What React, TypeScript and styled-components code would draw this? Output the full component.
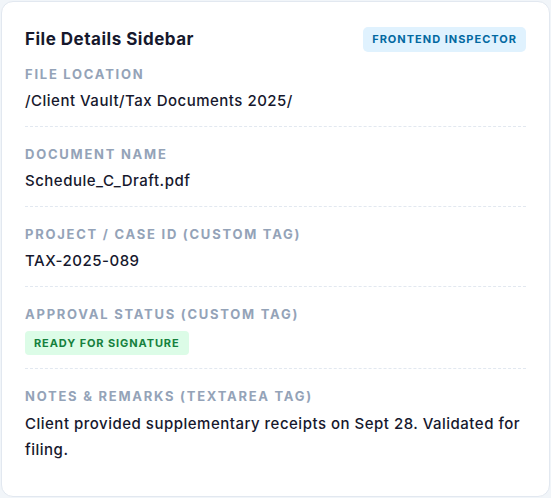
import styled, { createGlobalStyle } from "styled-components";

const GlobalStyle = createGlobalStyle`
  html, body {
    margin: 0;
    padding: 0;
    background: #f1f5f9;
  }
  body {
    font-family: Inter, "Noto Sans", sans-serif;
    -webkit-font-smoothing: antialiased;
  }
`;

type Field = {
  label: string;
  value: string;
  kind?: "text" | "status" | "notes";
};

const FIELDS: Field[] = [
  { label: "File Location", value: "/Client Vault/Tax Documents 2025/" },
  { label: "Document Name", value: "Schedule_C_Draft.pdf" },
  { label: "Project / Case ID (Custom Tag)", value: "TAX-2025-089" },
  { label: "Approval Status (Custom Tag)", value: "Ready for Signature", kind: "status" },
  {
    label: "Notes & Remarks (Textarea Tag)",
    value: "Client provided supplementary receipts on Sept 28. Validated for filing.",
    kind: "notes",
  },
];

export default function App() {
  return (
    <>
      <GlobalStyle />
      <Page>
        <Card>
          <Header>
            <Title>File Details Sidebar</Title>
            <Badge>Frontend Inspector</Badge>
          </Header>
          <FieldList>
            {FIELDS.map((f, i) => (
              <FieldRow key={f.label} $last={i === FIELDS.length - 1} $status={f.kind === "status"}>
                <Label>{f.label}</Label>
                {f.kind === "status" ? (
                  <StatusPill>{f.value}</StatusPill>
                ) : (
                  <Value $notes={f.kind === "notes"}>{f.value}</Value>
                )}
              </FieldRow>
            ))}
          </FieldList>
        </Card>
      </Page>
    </>
  );
}

const Page = styled.div`
  width: 551px;
  height: 498px;
  padding: 1px;
  box-sizing: border-box;
`;

const Card = styled.div`
  box-sizing: border-box;
  height: 100%;
  background: #ffffff;
  border: 1px solid #e2e8f0;
  border-radius: 12px;
  padding: 24px 23px 0 23px;
  display: flex;
  flex-direction: column;
`;

const Header = styled.div`
  display: flex;
  align-items: center;
  justify-content: space-between;
  height: 26px;
  margin-bottom: 13px;
`;

const Title = styled.h2`
  margin: 0;
  font-size: 17px;
  font-weight: 700;
  letter-spacing: 0.5px;
  color: #16182d;
`;

const Badge = styled.span`
  display: inline-flex;
  align-items: center;
  height: 25px;
  padding: 0 9px;
  border-radius: 5px;
  background: #e0f2fe;
  color: #0369a1;
  font-size: 11px;
  font-weight: 700;
  letter-spacing: 1px;
  text-transform: uppercase;
`;

const FieldList = styled.div`
  display: flex;
  flex-direction: column;
`;

const FieldRow = styled.div<{ $last?: boolean; $status?: boolean }>`
  display: flex;
  flex-direction: column;
  gap: ${(p) => (p.$last ? "6px" : "8px")};
  padding-bottom: ${(p) => (p.$last ? "0" : p.$status ? "13px" : "15px")};
  margin-bottom: ${(p) => (p.$last ? "0" : "18px")};
  border-bottom: ${(p) => (p.$last ? "none" : "1px dashed #e2e8f0")};
`;

const Label = styled.div`
  font-size: 13px;
  font-weight: 700;
  line-height: 18px;
  letter-spacing: 1.75px;
  text-transform: uppercase;
  color: #94a3b8;
`;

const Value = styled.div<{ $notes?: boolean }>`
  font-size: 15px;
  font-weight: 500;
  line-height: ${(p) => (p.$notes ? "26px" : "20px")};
  letter-spacing: 0.5px;
  color: #16182d;
`;

const StatusPill = styled.span`
  align-self: flex-start;
  display: inline-flex;
  align-items: center;
  height: 24px;
  padding: 0 9px;
  border-radius: 4px;
  background: #dcfce7;
  color: #15803d;
  font-size: 11px;
  font-weight: 700;
  letter-spacing: 0.9px;
  text-transform: uppercase;
`;
